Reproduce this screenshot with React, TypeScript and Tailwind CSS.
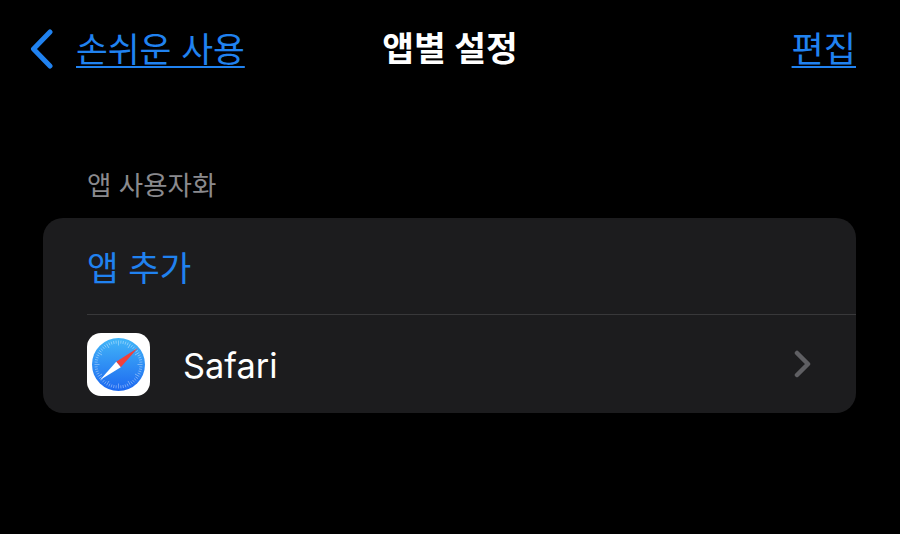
export default function App() {
  const ticks = Array.from({ length: 60 }, (_, i) => i * 6);
  return (
    <div className="w-[900px] h-[534px] bg-black overflow-hidden font-['Inter','Noto_Sans_CJK_KR',sans-serif]">
      <div className="relative flex items-center justify-between h-[62px] mt-[18px] pl-[30px] pr-[44px]">
        <div className="flex items-center gap-[23px]">
          <svg width="23" height="40" viewBox="0 0 23 40" fill="none">
            <path d="M20 3 L3.5 20 L20 37" stroke="#2082f0" strokeWidth="5" strokeLinecap="round" strokeLinejoin="round" />
          </svg>
          <span className="text-[34.6px] leading-[44px] text-[#2082f0] underline underline-offset-[4px] decoration-[2px]">손쉬운 사용</span>
        </div>
        <span className="absolute left-0 right-0 text-center text-[34.5px] leading-[44px] font-semibold text-white">앱별 설정</span>
        <span className="text-[35px] leading-[44px] text-[#2082f0] underline underline-offset-[4px] decoration-[2px]">편집</span>
      </div>
      <div className="pl-[87px] mt-[88px] text-[26.5px] leading-[34px] text-[#8a8a8e]">앱 사용자화</div>
      <div className="ml-[43px] mr-[44px] mt-[16px] rounded-[20px] bg-[#1c1c1e] overflow-hidden">
        <div className="flex items-center h-[96px] pl-[44px] pt-[5px] text-[34.3px] text-[#2082f0]">앱 추가</div>
        <div className="ml-[44px] h-px bg-[#38383a]" />
        <div className="flex items-center h-[98px] pl-[44px] pr-[44px]">
          <div className="w-[63px] h-[63px] rounded-[14px] bg-white flex items-center justify-center">
            <svg width="55" height="55" viewBox="0 0 55 55">
              <defs>
                <linearGradient id="sf" x1="0" y1="0" x2="0" y2="1">
                  <stop offset="0" stopColor="#42b6f8" />
                  <stop offset="1" stopColor="#1d68f0" />
                </linearGradient>
              </defs>
              <circle cx="27.5" cy="27.5" r="26.5" fill="url(#sf)" />
              {ticks.map((a) => (
                <line key={a} x1="27.5" y1="3.5" x2="27.5" y2={a % 30 === 0 ? 8.5 : 6.5} stroke="#fff" strokeOpacity="0.7" strokeWidth="0.5" transform={`rotate(${a} 27.5 27.5)`} />
              ))}
              <polygon points="46.7,11 25.2,24.8 29.8,30.2" fill="#f0403c" />
              <polygon points="9,43 25.2,24.8 29.8,30.2" fill="#fff" />
            </svg>
          </div>
          <span className="ml-[33px] pt-[3px] text-[34.3px] text-white flex-1">Safari</span>
          <svg width="18" height="28" viewBox="0 0 18 28" fill="none">
            <path d="M3 3 L14 14 L3 25" stroke="#5f5f63" strokeWidth="4.5" strokeLinecap="round" strokeLinejoin="round" />
          </svg>
        </div>
      </div>
    </div>
  );
}
